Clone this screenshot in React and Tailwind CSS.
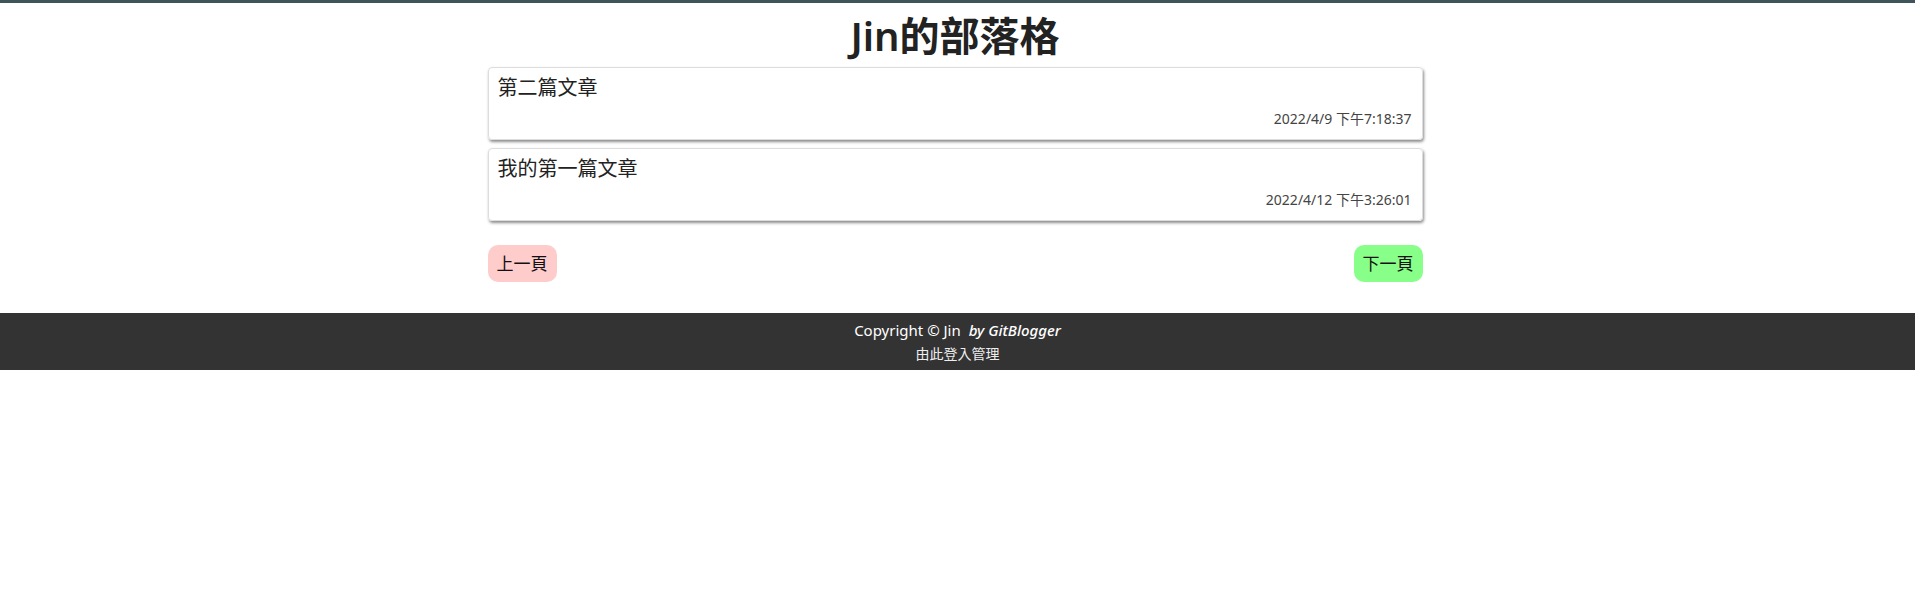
import React from 'react';

const posts = [
    { title: '第二篇文章', date: '2022/4/9 下午7:18:37' },
    { title: '我的第一篇文章', date: '2022/4/12 下午3:26:01' },
];

const font = { fontFamily: '"Noto Sans", "Noto Sans CJK TC", sans-serif' };

const App = () => {
    return (
        <div className="min-h-screen bg-white border-t-[3px] border-[#3e5458]" style={font}>
            <main className="mx-auto w-[940px] pr-[5px]">
                <h1 className="text-center text-[40px] font-semibold leading-[50px] text-[#222] pt-[8px] pb-[6px]">Jin的部落格</h1>

                <div className="flex flex-col gap-2">
                    {posts.map((p) => (
                        <div key={p.title} className="h-[73px] rounded border border-[#ddd] shadow-[1px_2px_3px_rgba(0,0,0,0.45)] pl-[9px] pr-[10px] pt-[7px]">
                            <h2 className="text-[20px] leading-[26px] text-[#222]">{p.title}</h2>
                            <p className="text-right text-[14px] leading-5 text-[#444] mt-[8px]">{p.date}</p>
                        </div>
                    ))}
                </div>

                <div className="flex justify-between mt-[24px]">
                    <button className="h-[37px] px-[9px] rounded-[10px] bg-[#ffcccc] text-[17px] text-[#111]">上一頁</button>
                    <button className="h-[37px] px-[9px] rounded-[10px] bg-[#88ff88] text-[17px] text-[#111]">下一頁</button>
                </div>
            </main>

            <footer className="mt-[31px] h-[57px] bg-[#333] text-white flex flex-col items-center pt-[7px]">
                <p className="text-[15px] leading-5">
                    Copyright © Jin <i className="font-medium ml-1">by GitBlogger</i>
                </p>
                <a className="text-[14px] leading-5 mt-[4px] text-[#eee]">由此登入管理</a>
            </footer>
        </div>
    );
};

export default App;
